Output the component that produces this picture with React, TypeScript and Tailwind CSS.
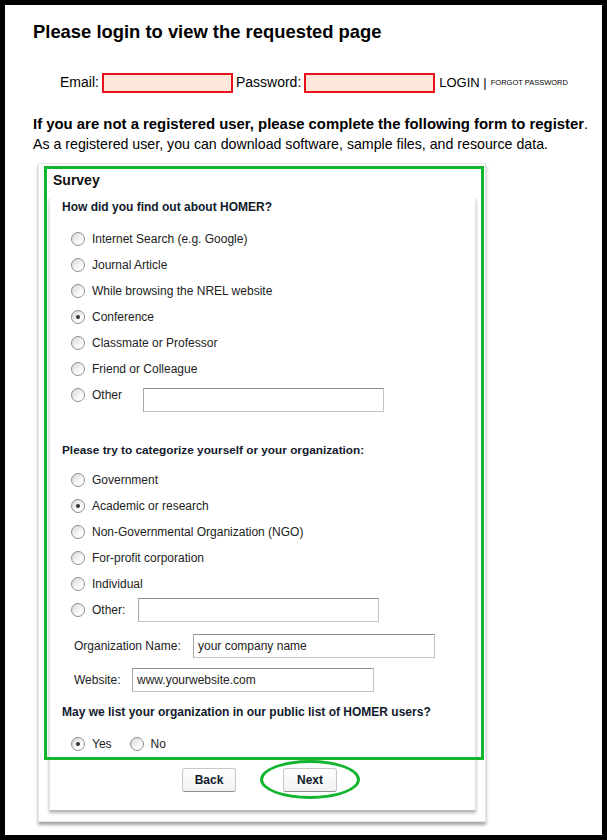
import React from "react";

function Radio({ checked }: { checked?: boolean }) {
  return (
    <span className="flex h-[14px] w-[14px] shrink-0 items-center justify-center rounded-full border border-[#8c8e90] bg-[linear-gradient(135deg,#d6d6d6,#fdfdfd_70%)]">
      {checked && <span className="h-[4px] w-[4px] rounded-full bg-[#333]" />}
    </span>
  );
}

function Option({ label, checked }: { label: string; checked?: boolean }) {
  return (
    <div className="ml-[21px] flex h-[26px] items-center gap-[7px] text-[12px] text-[#222]">
      <Radio checked={checked} />
      <span>{label}</span>
    </div>
  );
}

function TextBox({ value, w }: { value?: string; w: string }) {
  return (
    <div
      className={
        "flex h-[24px] items-center border border-[#c4c4c4] border-t-[#8f8f8f] border-l-[#a8a8a8] bg-white px-[4px] text-[12px] text-[#222] " +
        w
      }
    >
      {value}
    </div>
  );
}

export default function App() {
  const found = [
    "Internet Search (e.g. Google)",
    "Journal Article",
    "While browsing the NREL website",
    "Conference",
    "Classmate or Professor",
    "Friend or Colleague",
  ];
  const kinds = [
    "Government",
    "Academic or research",
    "Non-Governmental Organization (NGO)",
    "For-profit corporation",
    "Individual",
  ];

  return (
    <div className="h-[840px] w-[607px] bg-black p-[5px] font-['Liberation_Sans',Arial,sans-serif] text-black">
      <div className="relative h-full w-full bg-white">
        <h1 className="pl-[28px] pt-[16px] text-[18.4px] font-bold leading-[22px]">
          Please login to view the requested page
        </h1>

        {/* login row */}
        <div className="mt-[29px] flex items-center pl-[55px] text-[14px]">
          <span>Email:</span>
          <div className="ml-[3px] h-[20px] w-[131px] border-2 border-[#e8121c] bg-[#fde7da]" />
          <span className="ml-[3px]">Password:</span>
          <div className="ml-[3px] h-[20px] w-[131px] border-2 border-[#e8121c] bg-[#fde7da]" />
          <span className="ml-[4px] text-[13px]">LOGIN |</span>
          <span className="ml-[4px] text-[7.5px]">FORGOT PASSWORD</span>
        </div>

        <p className="mt-[21px] pl-[28px] text-[14.2px] leading-[20px]">
          <b className="text-[14.9px]">If you are not a registered user, please complete the following form to register</b>.
          <br />
          As a registered user, you can download software, sample files, and resource data.
        </p>

        {/* outer card */}
        <div className="ml-[33px] mt-[9px] w-[448px] border border-[#e6e6e6] bg-white pb-[11px] pt-[7px] shadow-[0_3px_3px_rgba(0,0,0,0.35)]">
          <div className="pl-[14px] text-[14px] font-bold leading-[18px] text-[#111]">Survey</div>

          {/* inner card */}
          <div className="ml-[10px] mt-[9px] w-[427px] border-x border-[#e4e4e4] bg-white pb-[18px] pt-[1px] shadow-[0_3px_3px_rgba(0,0,0,0.3)]">
            <div className="pl-[12px] text-[12px] font-bold leading-[16px] text-[#111a2c]">
              How did you find out about HOMER?
            </div>
            <div className="mt-[11px]">
              {found.map((f) => (
                <Option key={f} label={f} checked={f === "Conference"} />
              ))}
              <div className="flex items-start">
                <div className="ml-[21px] flex h-[26px] items-center gap-[7px] text-[12px] text-[#222]">
                  <Radio />
                  <span className="w-[51px]">Other</span>
                </div>
                <div className="mt-[6px]">
                  <TextBox w="w-[241px]" />
                </div>
              </div>
            </div>

            <div className="mt-[30px] pl-[12px] text-[11.8px] font-bold leading-[16px] text-[#111a2c]">
              Please try to categorize yourself or your organization:
            </div>
            <div className="mt-[9px]">
              {kinds.map((k) => (
                <Option key={k} label={k} checked={k === "Academic or research"} />
              ))}
              <div className="flex h-[26px] items-center">
                <div className="ml-[21px] flex items-center gap-[7px] text-[12px] text-[#222]">
                  <Radio />
                  <span className="w-[46px]">Other:</span>
                </div>
                <TextBox w="w-[241px]" />
              </div>
            </div>

            <div className="mt-[11px] flex items-center pl-[24px] text-[12px] text-[#222]">
              <span className="w-[119px]">Organization Name:</span>
              <TextBox value="your company name" w="w-[242px]" />
            </div>
            <div className="mt-[10px] flex items-center pl-[24px] text-[12px] text-[#222]">
              <span className="w-[58px]">Website:</span>
              <TextBox value="www.yourwebsite.com" w="w-[242px]" />
            </div>

            <div className="mt-[12px] pl-[12px] text-[12px] font-bold leading-[16px] text-[#111a2c]">
              May we list your organization in our public list of HOMER users?
            </div>
            <div className="mt-[11px] flex h-[26px] items-center text-[12px] text-[#222]">
              <div className="ml-[21px] flex items-center gap-[7px]">
                <Radio checked />
                <span>Yes</span>
              </div>
              <div className="ml-[18px] flex items-center gap-[7px]">
                <Radio />
                <span>No</span>
              </div>
            </div>

            <div className="mt-[11px] flex justify-center gap-[47px] pr-[6px]">
              <button className="h-[24px] w-[54px] rounded-[3px] border border-[#c8c8c8] border-b-[#8f8f8f] bg-[linear-gradient(#ffffff,#f1f1f1)] text-[12px] font-bold text-[#111a2c]">
                Back
              </button>
              <button className="h-[24px] w-[54px] rounded-[3px] border border-[#c8c8c8] border-b-[#8f8f8f] bg-[linear-gradient(#ffffff,#f1f1f1)] text-[12px] font-bold text-[#111a2c]">
                Next
              </button>
            </div>
          </div>
        </div>

        {/* green annotations */}
        <div className="pointer-events-none absolute left-[39px] top-[161px] h-[594px] w-[440px] border-[3px] border-[#12b52e]" />
        <div className="pointer-events-none absolute left-[255px] top-[755px] h-[39px] w-[100px] rounded-[50%] border-[3px] border-[#12b52e]" />
      </div>
    </div>
  );
}
